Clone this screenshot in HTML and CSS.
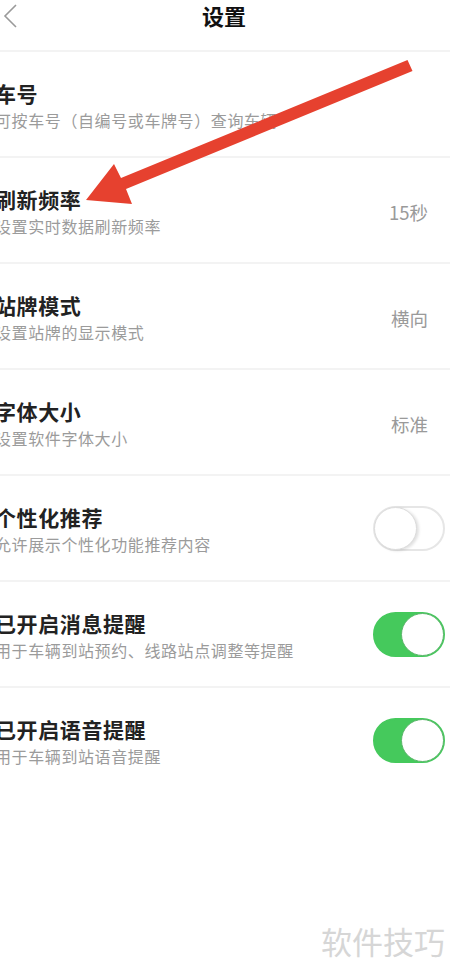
FILE: index.html
```html
<!DOCTYPE html>
<html lang="zh">
<head>
<meta charset="utf-8">
<link rel="stylesheet" href="styles.css">
</head>
<body>
<div class="page">
  <header class="header">
    <svg class="back" width="16" height="24" viewBox="0 0 16 24"><path d="M14 1 L3 12 L14 23" fill="none" stroke="#9a9a9a" stroke-width="1.6"/></svg>
    <h1 class="title">设置</h1>
  </header>
  <ul class="list">
    <li class="row">
      <div class="text"><div class="name">车号</div><div class="desc">可按车号（自编号或车牌号）查询车辆</div></div>
    </li>
    <li class="row">
      <div class="text"><div class="name">刷新频率</div><div class="desc">设置实时数据刷新频率</div></div>
      <div class="value">15秒</div>
    </li>
    <li class="row">
      <div class="text"><div class="name">站牌模式</div><div class="desc">设置站牌的显示模式</div></div>
      <div class="value">横向</div>
    </li>
    <li class="row">
      <div class="text"><div class="name">字体大小</div><div class="desc">设置软件字体大小</div></div>
      <div class="value">标准</div>
    </li>
    <li class="row">
      <div class="text"><div class="name">个性化推荐</div><div class="desc">允许展示个性化功能推荐内容</div></div>
      <div class="toggle"><span class="knob"></span></div>
    </li>
    <li class="row">
      <div class="text"><div class="name">已开启消息提醒</div><div class="desc">用于车辆到站预约、线路站点调整等提醒</div></div>
      <div class="toggle on"><span class="knob"></span></div>
    </li>
    <li class="row">
      <div class="text"><div class="name">已开启语音提醒</div><div class="desc">用于车辆到站语音提醒</div></div>
      <div class="toggle on"><span class="knob"></span></div>
    </li>
  </ul>
  <svg class="arrow" width="450" height="976" viewBox="0 0 450 976">
    <polygon fill="#e6412f" points="412.5,71 407.5,60 121,178 114,164 86,200 132,204 126,189"/>
  </svg>
  <div class="watermark">软件技巧</div>
</div>
</body>
</html>
```
FILE: styles.css
```css
* { box-sizing: border-box; }
html, body { margin: 0; padding: 0; background: #fff; }
body { font-family: "Noto Sans CJK SC", "Noto Sans", sans-serif; width: 450px; height: 976px; overflow: hidden; }
.page { position: relative; width: 450px; height: 976px; overflow: hidden; }
.header { height: 50px; display: flex; align-items: center; justify-content: center; position: relative; }
.back { position: absolute; left: 2px; top: 4px; }
.title { margin: 0; font-size: 22px; font-weight: 700; color: #111; line-height: 30px; margin-top: -20px; margin-left: -2px; }
.list { list-style: none; margin: 0; padding: 0; }
.row { height: 106px; border-top: 2px solid #f3f3f3; display: flex; align-items: center; justify-content: space-between; padding: 0 5px 0 0; }
.text { margin-left: -5px; margin-top: 4px; }
.name { font-size: 21px; font-weight: 700; color: #222; line-height: 28px; letter-spacing: 0.6px; }
.desc { font-size: 16px; color: #9b9b9b; line-height: 26px; letter-spacing: 0.6px; }
.value { margin-top: 4px; margin-right: 17px; font-size: 18.5px; color: #9a9a9a; }
.toggle { margin-top: 1px; margin-right: 0; width: 72px; height: 45px; border-radius: 23px; border: 2px solid #e6e6e6; background: #fff; position: relative; }
.knob { position: absolute; left: -1px; top: -1px; width: 43px; height: 43px; border-radius: 50%; background: #fff; border: 1.5px solid #dcdcdc; box-shadow: 2px 1px 3px rgba(0,0,0,0.12); }
.toggle.on { background: #45c95c; border-color: #45c95c; }
.toggle.on .knob { left: auto; right: -1px; border-color: #5bb66a; box-shadow: none; }
.arrow { position: absolute; left: 0; top: 0; pointer-events: none; }
.watermark { position: absolute; right: 5px; top: 918px; font-size: 31px; color: #d6d6d6; letter-spacing: 0; }
```
